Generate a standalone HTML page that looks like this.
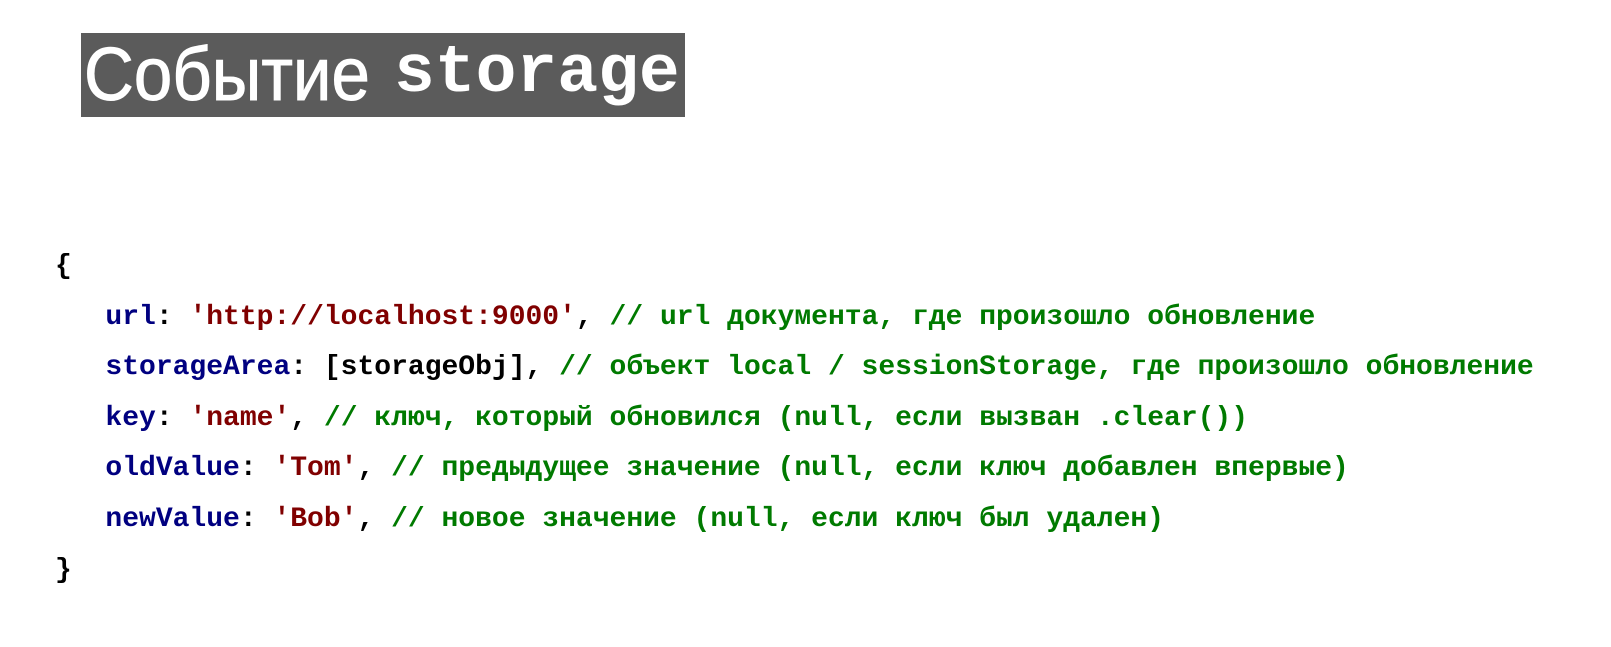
<!DOCTYPE html>
<html><head><meta charset="utf-8"><style>
body{margin:0;width:1611px;height:647px;background:#fff;position:relative;overflow:hidden}
.t{position:absolute;left:81px;top:33px;width:604px;height:84px;background:#5b5b5b}
.s1{position:absolute;left:84px;top:28px;font:75px "Liberation Sans",sans-serif;color:#fff;transform:scaleX(0.92);transform-origin:left;white-space:nowrap;line-height:92px;-webkit-text-stroke:1px #fff}
.s2{position:absolute;left:394px;top:28px;font:bold 68px "Liberation Mono",monospace;color:#fff;line-height:92px;white-space:nowrap}
.l{position:absolute;left:55px;font:bold 28px "Liberation Mono","DejaVu Sans Mono",monospace;white-space:pre;line-height:34px;color:#000}
.k{color:#000080}.r{color:#800000}.g{color:#007a00}
</style></head><body>
<div class="t"></div>
<div class="s1">Событие</div>
<div class="s2">storage</div>
<div class="l" style="top:250px">{</div>
<div class="l" style="top:301px">   <span class="k">url</span>: <span class="r">'http://localhost:9000'</span>, <span class="g">// url документа, где произошло обновление</span></div>
<div class="l" style="top:351px">   <span class="k">storageArea</span>: [storageObj], <span class="g">// объект local / sessionStorage, где произошло обновление</span></div>
<div class="l" style="top:402px">   <span class="k">key</span>: <span class="r">'name'</span>, <span class="g">// ключ, который обновился (null, если вызван .clear())</span></div>
<div class="l" style="top:452px">   <span class="k">oldValue</span>: <span class="r">'Tom'</span>, <span class="g">// предыдущее значение (null, если ключ добавлен впервые)</span></div>
<div class="l" style="top:503px">   <span class="k">newValue</span>: <span class="r">'Bob'</span>, <span class="g">// новое значение (null, если ключ был удален)</span></div>
<div class="l" style="top:554px">}</div>
</body></html>
